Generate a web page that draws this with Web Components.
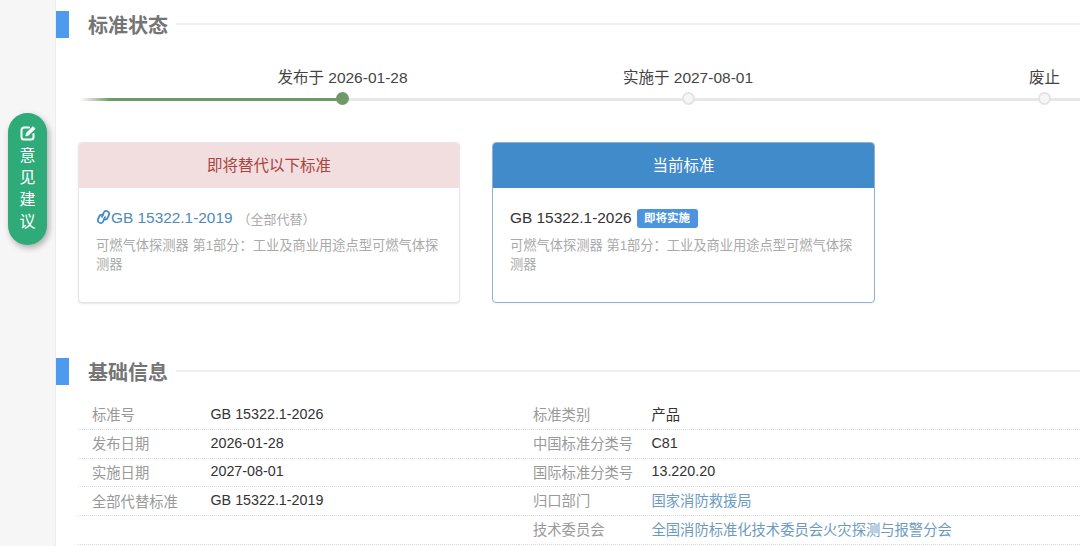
<!DOCTYPE html>
<html>
<head>
<meta charset="utf-8">
<style>
  html, body { margin: 0; height: 100%; overflow: hidden; background: #fff; }
  body {
    display: flex;
    font-family: "Liberation Sans", "Noto Sans CJK SC", sans-serif;
    color: #333;
  }
  main { flex: 1; min-width: 0; padding-top: 11px; overflow: hidden; }
  .cards { display: flex; gap: 32px; margin: 37px 0 0 22px; }
</style>
</head>
<body>
  <side-rail></side-rail>
  <main>
    <section-title>标准状态</section-title>
    <status-line>
      <status-step width="261" done>发布于 2026-01-28</status-step>
      <status-step width="430">实施于 2027-08-01</status-step>
      <status-step width="177" inset="126">废止</status-step>
    </status-line>
    <div class="cards">
      <standard-card kind="old" heading="即将替代以下标准">
        <link-icon slot="code"></link-icon><a-code slot="code">GB 15322.1-2019</a-code><note-text slot="code">（全部代替）</note-text>
        可燃气体探测器 第1部分：工业及商业用途点型可燃气体探测器
      </standard-card>
      <standard-card kind="current" heading="当前标准">
        <a-code slot="code" plain>GB 15322.1-2026</a-code><state-badge slot="code">即将实施</state-badge>
        可燃气体探测器 第1部分：工业及商业用途点型可燃气体探测器
      </standard-card>
    </div>
    <section-title style="margin-top:55px">基础信息</section-title>
    <info-table>
      <info-cell label="标准号">GB 15322.1-2026</info-cell>
      <info-cell label="标准类别">产品</info-cell>
      <info-cell label="发布日期">2026-01-28</info-cell>
      <info-cell label="中国标准分类号">C81</info-cell>
      <info-cell label="实施日期">2027-08-01</info-cell>
      <info-cell label="国际标准分类号">13.220.20</info-cell>
      <info-cell label="全部代替标准">GB 15322.1-2019</info-cell>
      <info-cell label="归口部门" link>国家消防救援局</info-cell>
      <info-cell></info-cell>
      <info-cell label="技术委员会" link>全国消防标准化技术委员会火灾探测与报警分会</info-cell>
    </info-table>
  </main>

  <script>
    // small helper, every element just stamps its html into an open shadow root
    class Base extends HTMLElement {
      constructor() {
        super();
        this.attachShadow({ mode: 'open' });
      }
      connectedCallback() {
        this.shadowRoot.innerHTML = this.markup();
      }
    }

    class SideRail extends Base {
      markup() {
        return `<style>
          :host { display: block; flex: 0 0 55px; position: relative; background: #f6f6f6; border-right: 1px solid #ececec; }
          .pill {
            position: absolute; left: 8px; top: 113px; width: 39px; height: 132px; box-sizing: border-box;
            padding-top: 12px; border-radius: 20px; background: #2fab79; color: #fff;
            box-shadow: 2px 3px 6px rgba(0,0,0,.3);
            display: flex; flex-direction: column; align-items: center;
            font-size: 16px; line-height: 22px;
          }
          svg { display: block; margin-bottom: 4px; }
        </style>
        <div class="pill">
          <svg width="16" height="16" viewBox="0 0 16 16" fill="none" stroke="#fff" stroke-width="2" stroke-linecap="round">
            <path d="M13.5 9v3a2.500 2.500 0 0 1-2.500 2.500H4A2.500 2.500 0 0 1 1.500 12V5A2.500 2.500 0 0 1 4 2.500h5"/>
            <path d="M6 10.500l.5-2.500 6.500-6.300 2 2-6.500 6.300z" fill="#fff" stroke-width="1"/>
          </svg>
          <span>意</span><span>见</span><span>建</span><span>议</span>
        </div>`;
      }
    }

    class SectionTitle extends Base {
      markup() {
        return `<style>
          :host { display: flex; align-items: center; height: 27px; }
          i { flex: 0 0 13px; height: 27px; background: #4d9bee; }
          b { margin: 0 8px 0 19px; font-size: 20px; font-weight: 700; color: #757575; }
          span { flex: 1; height: 2px; background: #f0f0f0; margin-top: -1px; }
        </style><i></i><b><slot></slot></b><span></span>`;
      }
    }

    class StatusLine extends Base {
      markup() {
        return `<style>
          :host { display: flex; margin: 29px 0 0 156px; position: relative; }
          .track {
            position: absolute; left: -132px; right: 0; top: 31px; height: 3px;
            background: linear-gradient(90deg, #fff 0, #6f9a68 30px, #6f9a68 262px, #e8e8e8 262px);
          }
          ::slotted(status-step) { position: relative; }
        </style><div class="track"></div><slot></slot>`;
      }
    }

    class StatusStep extends Base {
      markup() {
        const done = this.hasAttribute('done');
        const inset = this.getAttribute('inset');
        return `<style>
          :host { display: flex; justify-content: ${inset ? 'flex-start' : 'center'}; flex: 0 0 ${this.getAttribute('width')}px; box-sizing: border-box; padding-left: ${inset || 0}px; }
          div { display: flex; flex-direction: column; align-items: center; }
          span { font-size: 15.500px; line-height: 22px; color: #444; white-space: nowrap; }
          i {
            display: block; box-sizing: border-box; width: 13px; height: 13px; margin-top: 3px; border-radius: 50%;
            background: ${done ? '#6f9a68' : '#f6f6f6'}; border: 2px solid ${done ? '#6f9a68' : '#e3e3e3'};
          }
        </style><div><span><slot></slot></span><i></i></div>`;
      }
    }

    class StandardCard extends Base {
      markup() {
        const current = this.getAttribute('kind') == 'current';
        return `<style>
          :host { display: block; flex: 0 0 ${current ? 383 : 382}px; box-sizing: border-box; height: 161px; border-radius: 4px; overflow: hidden; background: #fff;
            border: 1px solid ${current ? '#8fb2cf' : '#e6e6e6'}; box-shadow: 0 1px 2px rgba(0,0,0,${current ? '.05' : '.1'}); }
          header { height: 45px; line-height: 45px; text-align: center; font-size: 15.500px;
            background: ${current ? '#428bca' : '#f2dede'}; color: ${current ? '#fff' : '#a94442'}; }
          .code { display: flex; align-items: center; height: 24px; margin: 18px 17px 0; font-size: 15.400px; }
          p { margin: 6px 17px 0; font-size: 13.250px; line-height: 19px; color: #aaa; }
        </style>
        <header>${this.getAttribute('heading')}</header>
        <div class="code"><slot name="code"></slot></div>
        <p><slot></slot></p>`;
      }
    }

    class LinkIcon extends Base {
      markup() {
        return `<style>:host { display: block; width: 15px; height: 16px; margin-top: -2px; }</style>
        <svg width="15" height="16" viewBox="-7.500 -8 15 16" fill="none" stroke="#428bca" stroke-width="1.800" stroke-linecap="round">
          <g transform="rotate(22)">
            <path d="M-1.400 .5V-4a2.800 2.800 0 0 1 5.600 0V-1a2.800 2.800 0 0 1-2.800 2.800"/>
            <path d="M1.400 -.5V4a2.800 2.800 0 0 1-5.600 0V1a2.800 2.800 0 0 1 2.800-2.800"/>
          </g>
        </svg>`;
      }
    }

    class ACode extends Base {
      markup() {
        return `<style>:host { display: block; white-space: nowrap; color: ${this.hasAttribute('plain') ? '#333' : '#4d8ab8'}; }</style><slot></slot>`;
      }
    }

    class NoteText extends Base {
      markup() {
        return `<style>:host { display: block; margin-left: 5px; font-size: 13px; color: #aaa; white-space: nowrap; }</style><slot></slot>`;
      }
    }

    class StateBadge extends Base {
      markup() {
        return `<style>:host { display: block; margin-left: 5px; padding: 0 7.500px; height: 19px; line-height: 19px; border-radius: 3px;
          background: #4c93e0; color: #fff; font-size: 11.500px; font-weight: 700; white-space: nowrap; }</style><slot></slot>`;
      }
    }

    class InfoTable extends Base {
      markup() {
        return `<style>
          :host { display: grid; grid-template-columns: 441px 1fr; grid-auto-rows: 28.800px; margin: 16px 0 0 22px; }
        </style><slot></slot>`;
      }
    }

    class InfoCell extends Base {
      markup() {
        const label = this.getAttribute('label') || '';
        const link = this.hasAttribute('link');
        return `<style>
          :host { display: flex; align-items: center; box-sizing: border-box; padding: 0 0 ${link ? 4 : 2}px 14px; border-bottom: 1px dotted #d9d9d9; font-size: 14.300px; }
          b { flex: 0 0 118.500px; font-weight: 400; color: #999; white-space: nowrap; }
          span { color: ${link ? '#6d9bc0' : '#333'}; white-space: nowrap; }
        </style><b>${label}</b><span><slot></slot></span>`;
      }
    }

    customElements.define('side-rail', SideRail);
    customElements.define('section-title', SectionTitle);
    customElements.define('status-line', StatusLine);
    customElements.define('status-step', StatusStep);
    customElements.define('standard-card', StandardCard);
    customElements.define('link-icon', LinkIcon);
    customElements.define('a-code', ACode);
    customElements.define('note-text', NoteText);
    customElements.define('state-badge', StateBadge);
    customElements.define('info-table', InfoTable);
    customElements.define('info-cell', InfoCell);
  </script>
</body>
</html>
